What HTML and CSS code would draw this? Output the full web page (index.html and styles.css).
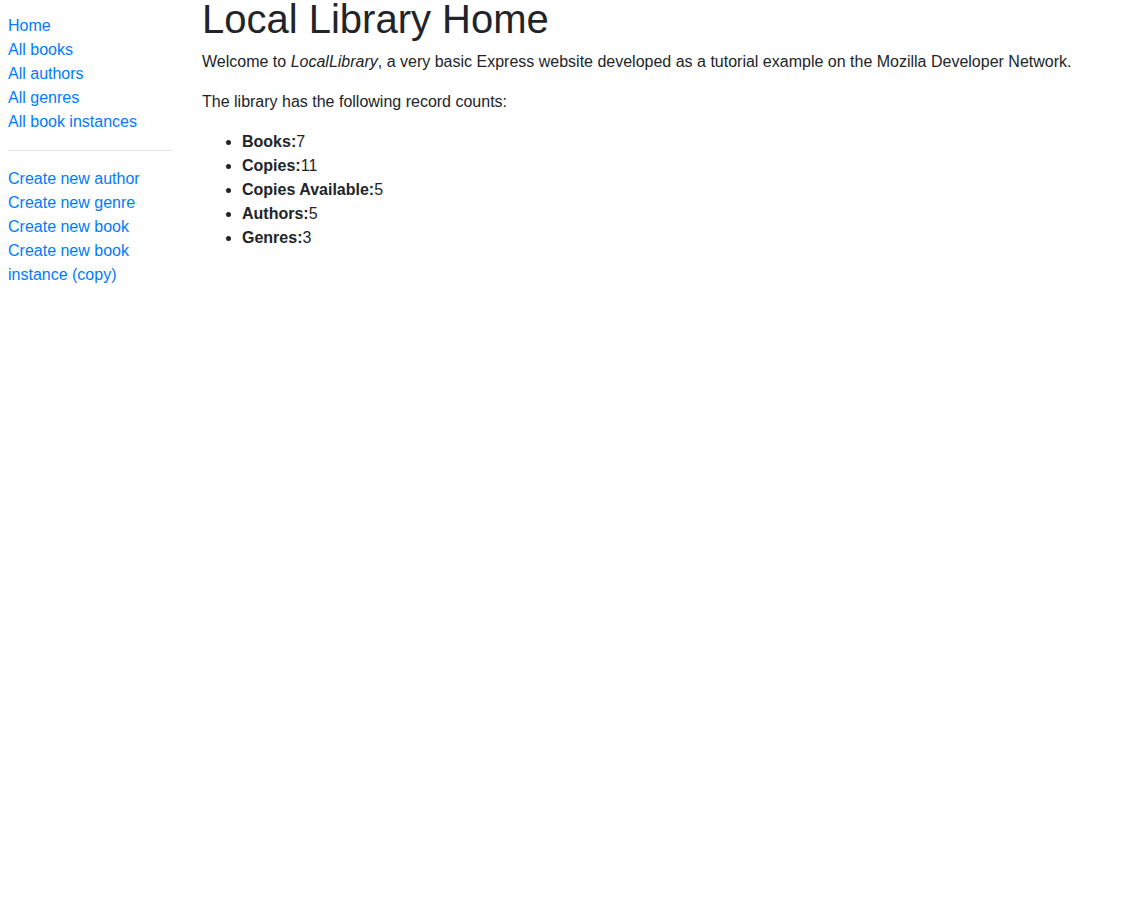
FILE: index.html
```html
<!DOCTYPE html>
<html lang="en">
<head>
<meta charset="utf-8">
<title>Local Library</title>
<link rel="stylesheet" href="styles.css">
</head>
<body>
<div class="layout">
  <nav class="sidebar">
    <ul class="sidebar-nav">
      <li><a href="#">Home</a></li>
      <li><a href="#">All books</a></li>
      <li><a href="#">All authors</a></li>
      <li><a href="#">All genres</a></li>
      <li><a href="#">All book instances</a></li>
      <li><hr class="divider"></li>
      <li><a href="#">Create new author</a></li>
      <li><a href="#">Create new genre</a></li>
      <li><a href="#">Create new book</a></li>
      <li><a href="#">Create new book instance (copy)</a></li>
    </ul>
  </nav>
  <main class="content">
    <h1 class="title">Local Library Home</h1>
    <p class="para">Welcome to <em>LocalLibrary</em>, a very basic Express website developed as a tutorial example on the Mozilla Developer Network.</p>
    <p class="para">The library has the following record counts:</p>
    <ul class="counts">
      <li><strong>Books:</strong>7</li>
      <li><strong>Copies:</strong>11</li>
      <li><strong>Copies Available:</strong>5</li>
      <li><strong>Authors:</strong>5</li>
      <li><strong>Genres:</strong>3</li>
    </ul>
  </main>
</div>
</body>
</html>
```
FILE: styles.css
```css
html, body {
  margin: 0;
  padding: 0;
  background: #fff;
}
body {
  font-family: "Liberation Sans", Arial, sans-serif;
  font-size: 16px;
  line-height: 24px;
  color: #212529;
}
.layout {
  display: flex;
  align-items: flex-start;
}
.sidebar {
  width: 187px;
  flex: 0 0 187px;
  box-sizing: border-box;
  padding: 14px 15px 0 8px;
}
.sidebar-nav {
  list-style: none;
  margin: 0;
  padding: 0;
}
.sidebar-nav a {
  color: #007bff;
  text-decoration: none;
}
.divider {
  margin: 16px 0;
  border: 0;
  border-top: 1px solid rgba(0, 0, 0, 0.1);
  height: 0;
}
.content {
  flex: 1;
  padding: 0 15px;
}
.title {
  margin: 0 0 12px 0;
  font-size: 40px;
  font-weight: 500;
  line-height: 38px;
}
.para {
  margin: 0 0 16px 0;
}
.counts {
  margin: 0 0 16px 0;
  padding-left: 40px;
}
.counts strong {
  font-weight: bold;
}
```
